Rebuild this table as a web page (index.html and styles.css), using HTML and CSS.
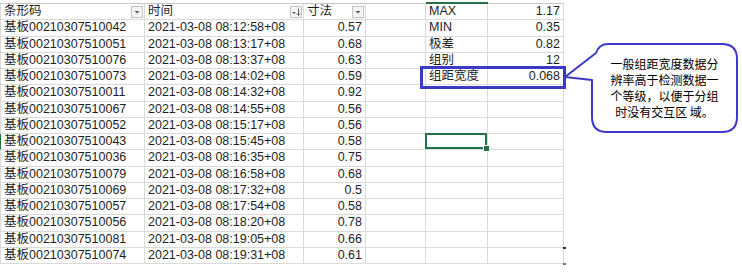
FILE: index.html
```html
<!DOCTYPE html>
<html lang="zh">
<head>
<meta charset="utf-8">
<title>组距宽度</title>
<link rel="stylesheet" href="styles.css">
</head>
<body>
<div class="sheet">
  <div class="colstrip"><span></span><span></span><span></span><span></span><span class="on"></span><span></span></div>
  <div class="grid">
    <div class="c a h"><span>条形码</span><svg class="btn" width="12" height="12" viewBox="0 0 12 12"><rect x="0.5" y="0.5" width="11" height="11" fill="#f4f4f4" stroke="#c4c4c4"/><path d="M3.5 5h5l-2.5 2.5z" fill="#5a5a5a"/></svg></div>
    <div class="c h"><span>时间</span><svg class="btn" width="12" height="12" viewBox="0 0 12 12"><rect x="0.5" y="0.5" width="11" height="11" fill="#f4f4f4" stroke="#c4c4c4"/><path d="M2 6h4l-2 2z" fill="#5a5a5a"/><path d="M8.5 2.5v6.5" stroke="#5a5a5a" stroke-width="1"/><path d="M7 7.5l1.5 2l1.5-2" fill="none" stroke="#5a5a5a" stroke-width="1"/></svg></div>
    <div class="c h"><span>寸法</span><svg class="btn" width="12" height="12" viewBox="0 0 12 12"><rect x="0.5" y="0.5" width="11" height="11" fill="#f4f4f4" stroke="#c4c4c4"/><path d="M3.5 5h5l-2.5 2.5z" fill="#5a5a5a"/></svg></div>
    <div class="c"></div><div class="c">MAX</div><div class="c r">1.17</div>

    <div class="c a">基板00210307510042</div><div class="c">2021-03-08 08:12:58+08</div><div class="c r">0.57</div><div class="c"></div><div class="c">MIN</div><div class="c r">0.35</div>
    <div class="c a">基板00210307510051</div><div class="c">2021-03-08 08:13:17+08</div><div class="c r">0.68</div><div class="c"></div><div class="c">极差</div><div class="c r">0.82</div>
    <div class="c a">基板00210307510076</div><div class="c">2021-03-08 08:13:37+08</div><div class="c r">0.63</div><div class="c"></div><div class="c">组别</div><div class="c r">12</div>
    <div class="c a">基板00210307510073</div><div class="c">2021-03-08 08:14:02+08</div><div class="c r">0.59</div><div class="c"></div><div class="c">组距宽度</div><div class="c r">0.068</div>
    <div class="c a">基板00210307510011</div><div class="c">2021-03-08 08:14:32+08</div><div class="c r">0.92</div><div class="c"></div><div class="c"></div><div class="c"></div>
    <div class="c a">基板00210307510067</div><div class="c">2021-03-08 08:14:55+08</div><div class="c r">0.56</div><div class="c"></div><div class="c"></div><div class="c"></div>
    <div class="c a">基板00210307510052</div><div class="c">2021-03-08 08:15:17+08</div><div class="c r">0.56</div><div class="c"></div><div class="c"></div><div class="c"></div>
    <div class="c a rowsel">基板00210307510043</div><div class="c">2021-03-08 08:15:45+08</div><div class="c r">0.58</div><div class="c"></div><div class="c sel"></div><div class="c"></div>
    <div class="c a">基板00210307510036</div><div class="c">2021-03-08 08:16:35+08</div><div class="c r">0.75</div><div class="c"></div><div class="c"></div><div class="c"></div>
    <div class="c a">基板00210307510079</div><div class="c">2021-03-08 08:16:58+08</div><div class="c r">0.68</div><div class="c"></div><div class="c"></div><div class="c"></div>
    <div class="c a">基板00210307510069</div><div class="c">2021-03-08 08:17:32+08</div><div class="c r">0.5</div><div class="c"></div><div class="c"></div><div class="c"></div>
    <div class="c a">基板00210307510057</div><div class="c">2021-03-08 08:17:54+08</div><div class="c r">0.58</div><div class="c"></div><div class="c"></div><div class="c"></div>
    <div class="c a">基板00210307510056</div><div class="c">2021-03-08 08:18:20+08</div><div class="c r">0.78</div><div class="c"></div><div class="c"></div><div class="c"></div>
    <div class="c a">基板00210307510081</div><div class="c">2021-03-08 08:19:05+08</div><div class="c r">0.66</div><div class="c"></div><div class="c"></div><div class="c"></div>
    <div class="c a">基板00210307510074</div><div class="c">2021-03-08 08:19:31+08</div><div class="c r">0.61</div><div class="c"></div><div class="c"></div><div class="c"></div>
  </div>

  <span class="pb pb1"></span>
  <span class="pb pb2"></span>

  <div class="hl"></div>

  <div class="callout">
    <svg class="bubble" width="182" height="96" viewBox="0 0 182 96">
      <path d="M48 4H162Q177 4 177 19V77Q177 92 162 92H47Q32 92 32 77V40L5 37L36 13Q39 4 48 4Z" fill="#fff" stroke="#3a3ac2" stroke-width="2" stroke-linejoin="round"/>
    </svg>
    <div class="note">一般组距宽度数据分<br>辨率高于检测数据一<br>个等级，以便于分组<br>时没有交互区 域。</div>
  </div>
</div>
</body>
</html>
```

FILE: styles.css
```css
* { box-sizing: border-box; }

body {
  margin: 0;
  background: #ffffff;
  font-family: "Liberation Sans", "Noto Sans CJK SC", sans-serif;
  font-size: 12.5px;
  color: #1e1e1e;
}

.sheet {
  position: relative;
  width: 742px;
  height: 280px;
  overflow: hidden;
}

.colstrip {
  display: grid;
  grid-template-columns: 145px 159px 62px 60px 62px 76px;
  width: 564px;
  height: 4px;
}

.colstrip span {
  border-bottom: 1px solid #c8c8c8;
}

.colstrip .on {
  border-bottom: 2px solid #217346;
}

.grid {
  display: grid;
  grid-template-columns: 145px 159px 62px 60px 62px 76px;
  grid-auto-rows: 16.25px;
  width: 564px;
}

.c {
  position: relative;
  border-right: 1px solid #dadada;
  border-bottom: 1px solid #dadada;
  padding: 0 3px;
  line-height: 15.25px;
  white-space: nowrap;
  overflow: hidden;
}

.a { border-left: 1px solid #dadada; }
.rowsel { border-left: 1px solid #217346; }

.r { text-align: right; }

.h {
  display: flex;
  justify-content: space-between;
  align-items: center;
  padding-right: 1px;
}

.btn { flex: none; display: block; }

.sel { overflow: visible; }
.sel::after {
  content: "";
  position: absolute;
  left: -1px;
  top: -1px;
  right: 0;
  bottom: 0;
  border: 2px solid #217346;
}
.sel::before {
  content: "";
  position: absolute;
  right: -3px;
  bottom: -3px;
  width: 5px;
  height: 5px;
  background: #217346;
  border: 1px solid #ffffff;
  z-index: 2;
}

.pb {
  position: absolute;
  left: 563px;
  width: 3px;
  height: 2px;
  background: #2a2a2a;
}
.pb1 { top: 247px; }
.pb2 { top: 263px; background: #777; }

.hl {
  position: absolute;
  left: 420px;
  top: 66px;
  width: 146px;
  height: 23px;
  border: 3px solid #3a3ac2;
}

.callout {
  position: absolute;
  left: 560px;
  top: 40px;
  width: 182px;
  height: 96px;
}

.bubble {
  position: absolute;
  left: 0;
  top: 0;
}

.note {
  position: absolute;
  left: 32px;
  top: 4px;
  width: 145px;
  height: 88px;
  display: flex;
  align-items: center;
  justify-content: center;
  text-align: center;
  font-family: "Noto Sans CJK SC", sans-serif;
  font-size: 12px;
  line-height: 16px;
  color: #000;
}
```
